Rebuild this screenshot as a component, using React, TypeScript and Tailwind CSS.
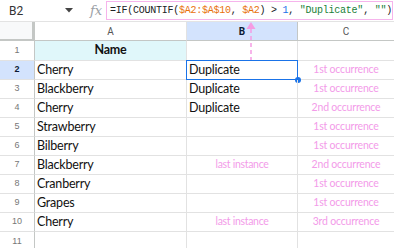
import React from "react";

const rows: [string, string, string][] = [
  ["Cherry", "Duplicate", "1st occurrence"],
  ["Blackberry", "Duplicate", "1st occurrence"],
  ["Cherry", "Duplicate", "2nd occurrence"],
  ["Strawberry", "", "1st occurrence"],
  ["Bilberry", "", "1st occurrence"],
  ["Blackberry", "last instance", "2nd occurrence"],
  ["Cranberry", "", "1st occurrence"],
  ["Grapes", "", "1st occurrence"],
  ["Cherry", "last instance", "3rd occurrence"],
];

const grid = "border-[#e2e2e2]";

export default function App() {
  return (
    <div className="relative w-[394px] h-[248px] overflow-hidden bg-white" style={{ fontFamily: "Lato, 'Open Sans', sans-serif" }}>
      {/* formula bar */}
      <div className="flex h-[22px] border-b border-[#e3e3e3] items-stretch">
        <div className="w-[82px] flex items-center pl-[9px] text-[12px] text-[#333]" style={{ fontFamily: "Roboto, sans-serif" }}>
          <span className="flex-1">B2</span>
          <svg width="8" height="5" viewBox="0 0 8 5" className="mr-[9px]"><path d="M0 0 L8 0 L4 4.5 Z" fill="#444" /></svg>
        </div>
        <div className="w-[24px] flex items-center pl-[8px] text-[13px] italic text-[#9aa0a6]" style={{ fontFamily: "'DejaVu Serif', serif" }}>
          fx
        </div>
        <div className="flex-1 mt-[1px] mb-[1px] mr-[1px] border border-[#f6b4ec] flex items-center pl-[3px] text-[10px] whitespace-nowrap text-[#202124] tracking-[-0.25px]" style={{ fontFamily: "'Liberation Mono', monospace" }}>
          <span>=IF(COUNTIF(</span>
          <span className="text-[#e8710a]">$A2:$A$10</span>
          <span>,&nbsp;</span>
          <span className="text-[#e8710a]">$A2</span>
          <span>)&nbsp;&gt;&nbsp;</span>
          <span className="text-[#1a73e8]">1</span>
          <span>,&nbsp;</span>
          <span className="text-[#188038]">"Duplicate"</span>
          <span>,&nbsp;</span>
          <span className="text-[#188038]">""</span>
          <span>)</span>
        </div>
      </div>

      {/* column headers */}
      <div className="flex h-[19px] text-[10px] text-[#555]" style={{ fontFamily: "Roboto, sans-serif" }}>
        <div className="w-[35px] bg-[#f8f9fa] border-r-[3px] border-b-[2px] border-[#c4c7c5]" />
        <div className={`w-[152px] border-r border-b ${grid} border-b-[#c4c7c5] flex items-center justify-center`}>A</div>
        <div className="w-[111px] border-r border-b border-r-[#c4c7c5] border-b-[#c4c7c5] bg-[#d3e3fd] flex items-center justify-center font-bold text-[#0b1a33]">B</div>
        <div className={`flex-1 border-b border-b-[#c4c7c5] flex items-center justify-center`}>C</div>
      </div>

      {/* row 1 */}
      <div className="flex h-[20px]">
        <div className={`w-[35px] border-r border-r-[#c4c7c5] border-b ${grid} flex items-center justify-center text-[9px] text-[#777]`} style={{ fontFamily: "'Liberation Sans', sans-serif" }}>1</div>
        <div className={`w-[152px] border-r border-b ${grid} bg-[#e0f7fa] flex items-center justify-center text-[12.5px] font-bold text-[#111] tracking-[-0.2px]`}>Name</div>
        <div className={`w-[111px] border-r border-b ${grid}`} />
        <div className={`flex-1 border-b ${grid}`} />
      </div>

      {rows.map((r, i) => {
        const n = i + 2;
        const sel = n === 2;
        return (
          <div key={n} className="flex h-[19px]">
            <div
              className={`w-[35px] border-r border-r-[#c4c7c5] border-b ${grid} flex items-center justify-center text-[9px] ${sel ? "bg-[#d3e3fd] font-bold text-[#0b1a33]" : "text-[#777]"}`}
              style={{ fontFamily: "'Liberation Sans', sans-serif" }}
            >
              {n}
            </div>
            <div className={`w-[152px] border-r border-b ${grid} flex items-center pl-[2px] text-[12.5px] tracking-[-0.2px] text-[#111]`}>{r[0]}</div>
            <div
              className={`relative w-[111px] border-r border-b ${grid} flex items-center ${
                r[1] === "Duplicate" ? "pl-[2px] text-[#111] text-[12.5px] tracking-[-0.2px]" : "justify-center text-[#f39be9] text-[10.5px] tracking-[-0.3px]"
              }`}
            >
              {r[1]}
              {sel && (
                <div className="absolute left-[-1px] top-[-1px] w-[112px] h-[20px] border-[1.5px] border-[#1a73e8]">
                  <div className="absolute right-[-4px] bottom-[-4px] w-[6px] h-[6px] rounded-full bg-[#1a73e8]" />
                </div>
              )}
            </div>
            <div className={`flex-1 border-b ${grid} flex items-center justify-center text-[10.5px] tracking-[-0.2px] text-[#f39be9]`}>{r[2]}</div>
          </div>
        );
      })}

      {/* row 11 */}
      <div className="flex h-[20px]">
        <div className="w-[35px] border-r border-r-[#c4c7c5] flex items-center justify-center text-[9px] text-[#777]" style={{ fontFamily: "'Liberation Sans', sans-serif" }}>11</div>
        <div className={`w-[152px] border-r ${grid}`} />
        <div className={`w-[111px] border-r ${grid}`} />
        <div className="flex-1" />
      </div>

      {/* pink arrow overlay */}
      <svg className="absolute left-[245px] top-[21px]" width="12" height="40" viewBox="0 0 12 40">
        <path d="M6 1 L10.5 8 L1.5 8 Z" fill="#f59ce3" />
        <line x1="6" y1="8" x2="6" y2="39" stroke="#f59ce3" strokeWidth="1.5" strokeDasharray="4 3" />
      </svg>
    </div>
  );
}
